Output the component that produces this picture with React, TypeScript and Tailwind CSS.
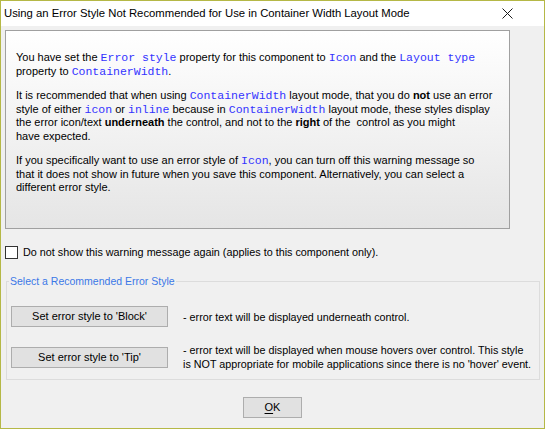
const font = "font-['Liberation_Sans',Arial,sans-serif]";

function Code({ children }: { children: React.ReactNode }) {
  return (
    <span className="font-['Liberation_Mono','Courier_New',monospace] text-[11.5px] text-[#3333ff]">
      {children}
    </span>
  );
}

function Button({ label, width, underlineFirst }: { label: string; width: string; underlineFirst?: boolean }) {
  return (
    <button
      className={`${width} h-[21px] shrink-0 border border-[#adadad] bg-[#e1e1e1] text-[11px] leading-[19px] text-black`}
    >
      {underlineFirst ? (
        <>
          <span className="underline underline-offset-2">{label[0]}</span>
          {label.slice(1)}
        </>
      ) : (
        label
      )}
    </button>
  );
}

export default function App() {
  return (
    <div className={`${font} flex h-[429px] w-[545px] flex-col border border-[#b5b846] bg-[#f0f0f0] text-black`}>
      {/* title bar */}
      <div className="flex h-[25px] shrink-0 items-center justify-between bg-white pl-[3px] pr-[31px] text-[11.3px]">
        <span>Using an Error Style Not Recommended for Use in Container Width Layout Mode</span>
        <svg width="11" height="11" viewBox="0 0 11 11" className="text-[#1a1a1a]">
          <path d="M0.5 0.5 L10.5 10.5 M10.5 0.5 L0.5 10.5" stroke="currentColor" strokeWidth="1" fill="none" />
        </svg>
      </div>

      <div className="flex flex-col pl-[4px] pt-[4px]">
        {/* message panel */}
        <div className="h-[199px] w-[505px] border border-[#a0a0a0] bg-gradient-to-b from-white to-[#e5e5e5] px-[10px] pt-[20px] text-[11px] leading-[13.5px] whitespace-nowrap">
          <p>
            You have set the <Code>Error style</Code> property for this component to <Code>Icon</Code> and the{" "}
            <Code>Layout type</Code>
            <br />
            property to <Code>ContainerWidth</Code>.
          </p>
          <p className="mt-[11px]">
            It is recommended that when using <Code>ContainerWidth</Code> layout mode, that you do <b>not</b> use an
            error
            <br />
            style of either <Code>icon</Code> or <Code>inline</Code> because in <Code>ContainerWidth</Code> layout mode,
            these styles display
            <br />
            the error icon/text <b>underneath</b> the control, and not to the <b>right</b> of the&nbsp; control as you
            might
            <br />
            have expected.
          </p>
          <p className="mt-[11px]">
            If you specifically want to use an error style of <Code>Icon</Code>, you can turn off this warning message so
            <br />
            that it does not show in future when you save this component. Alternatively, you can select a
            <br />
            different error style.
          </p>
        </div>

        {/* checkbox */}
        <label className="mt-[15px] flex items-center text-[10.8px]">
          <span className="h-[13px] w-[13px] shrink-0 border border-[#333] bg-white" />
          <span className="ml-[5px]">Do not show this warning message again (applies to this component only).</span>
        </label>

        {/* group box */}
        <fieldset className="ml-px mt-[13px] h-[107px] w-[534px] border border-[#dcdcdc] px-[2px] text-[10.75px]">
          <legend className="px-px text-[10.5px] leading-[16px] text-[#3b78e7]">Select a Recommended Error Style</legend>
          <div className="mt-[17px] flex items-center gap-[15px] pl-[2px]">
            <Button label="Set error style to 'Block'" width="w-[157px]" />
            <span className="whitespace-nowrap">- error text will be displayed underneath control.</span>
          </div>
          <div className="mt-[17px] flex items-center gap-[15px] pl-[2px]">
            <Button label="Set error style to 'Tip'" width="w-[157px]" />
            <span className="whitespace-nowrap leading-[13.5px]">
              - error text will be displayed when mouse hovers over control. This style
              <br />
              is NOT appropriate for mobile applications since there is no 'hover' event.
            </span>
          </div>
        </fieldset>

        <div className="mt-[17px] flex pl-[238px]">
          <Button label="OK" width="w-[59px]" underlineFirst />
        </div>
      </div>
    </div>
  );
}
